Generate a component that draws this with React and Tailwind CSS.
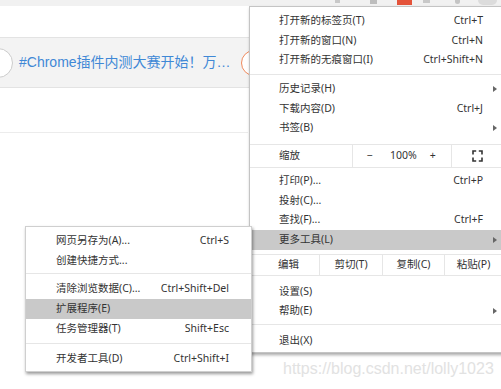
import clsx from 'clsx';

const menuFont = "font-['Noto_Sans','Noto_Sans_CJK_SC',sans-serif]";

function Arrow() {
  return <span className="h-0 w-0 border-y-[3.5px] border-l-[4px] border-y-transparent border-l-[#666]" />;
}

function Item({ label, shortcut, arrow, active }) {
  return (
    <div className={clsx('flex h-[19.5px] items-center pl-[29px] pr-[5px]', active && 'bg-[#c9c9c9]')}>
      <span className="flex-1 whitespace-nowrap">{label}</span>
      {shortcut && <span className="mr-[14px] whitespace-nowrap">{shortcut}</span>}
      {arrow && <Arrow />}
    </div>
  );
}

function SubItem({ label, shortcut, active }) {
  return (
    <div className={clsx('flex h-[20px] items-center pl-[30px] pr-[22px]', active && 'bg-[#c9c9c9]')}>
      <span className="flex-1 whitespace-nowrap">{label}</span>
      {shortcut && <span className="whitespace-nowrap">{shortcut}</span>}
    </div>
  );
}

function FullscreenIcon() {
  return (
    <svg width="11" height="12" viewBox="0 0 11 12">
      <path d="M1 4.5V1h3.2M6.8 1H10v3.5M10 7.5V11H6.8M4.2 11H1V7.5" stroke="#333" strokeWidth="1.6" fill="none" />
    </svg>
  );
}

function MainMenu() {
  return (
    <div className={clsx('absolute left-[249px] top-[6px] w-[254px] border border-[#c4c4c4] bg-white pt-[4.5px] pb-px text-[10.5px] text-[#333] shadow-[1px_2px_3px_rgba(0,0,0,0.35)]', menuFont)}>
      <Item label="打开新的标签页(T)" shortcut="Ctrl+T" />
      <Item label="打开新的窗口(N)" shortcut="Ctrl+N" />
      <Item label="打开新的无痕窗口(I)" shortcut="Ctrl+Shift+N" />
      <div className="mt-[4px] mb-[4.5px] h-px bg-[#e6e6e6]" />
      <Item label="历史记录(H)" arrow />
      <Item label="下载内容(D)" shortcut="Ctrl+J" />
      <Item label="书签(B)" arrow />
      <div className="mt-[6px] h-px bg-[#e6e6e6]" />
      <div className="flex h-[22px] items-stretch">
        <div className="flex w-[102px] items-center pl-[29px]">缩放</div>
        <div className="w-px bg-[#e6e6e6]" />
        <div className="flex w-[98px] items-center pl-[14px]">
          <span>−</span>
          <span className="ml-[17px]">100%</span>
          <span className="ml-[13px]">+</span>
        </div>
        <div className="w-px bg-[#e6e6e6]" />
        <div className="flex w-[50px] items-center justify-center">
          <FullscreenIcon />
        </div>
      </div>
      <div className="mb-[3.5px] h-px bg-[#e6e6e6]" />
      <Item label="打印(P)..." shortcut="Ctrl+P" />
      <Item label="投射(C)..." />
      <Item label="查找(F)..." shortcut="Ctrl+F" />
      <Item label="更多工具(L)" arrow active />
      <div className="mt-[4.5px] h-px bg-[#e6e6e6]" />
      <div className="flex h-[20px] items-stretch">
        <div className="flex w-[69px] items-center pl-[28px]">编辑</div>
        <div className="w-px bg-[#e6e6e6]" />
        <div className="flex w-[62px] items-center justify-center">剪切(T)</div>
        <div className="w-px bg-[#e6e6e6]" />
        <div className="flex w-[61px] items-center justify-center">复制(C)</div>
        <div className="w-px bg-[#e6e6e6]" />
        <div className="flex w-[57px] items-center justify-center">粘贴(P)</div>
      </div>
      <div className="mb-[6px] h-px bg-[#e6e6e6]" />
      <Item label="设置(S)" />
      <Item label="帮助(E)" arrow />
      <div className="mt-[3px] mb-[6.5px] h-px bg-[#e6e6e6]" />
      <Item label="退出(X)" />
    </div>
  );
}

function ToolsMenu() {
  return (
    <div className={clsx('absolute left-[25px] top-[226px] w-[227px] border border-[#cfcfcf] bg-white pt-[4px] pb-[2px] text-[10.5px] text-[#333] shadow-[1px_2px_3px_rgba(0,0,0,0.4)]', menuFont)}>
      <SubItem label="网页另存为(A)..." shortcut="Ctrl+S" />
      <SubItem label="创建快捷方式..." />
      <div className="mt-[2px] mb-[5px] h-px bg-[#e6e6e6]" />
      <SubItem label="清除浏览数据(C)..." shortcut="Ctrl+Shift+Del" />
      <SubItem label="扩展程序(E)" active />
      <SubItem label="任务管理器(T)" shortcut="Shift+Esc" />
      <div className="mt-[4px] mb-[5px] h-px bg-[#e6e6e6]" />
      <SubItem label="开发者工具(D)" shortcut="Ctrl+Shift+I" />
    </div>
  );
}

export default function App() {
  return (
    <div className="relative h-[389px] w-[501px] overflow-hidden bg-white">
      {/* browser toolbar, mostly cut off */}
      <div className="flex h-[6px] items-start bg-[#f1f1f1] pl-[335px]">
        <div className="h-[3px] w-[5px] bg-[#c8c8c8]" />
        <div className="ml-[30px] h-[4px] w-[7px] bg-[#bdbdbd]" />
        <div className="ml-[20px] h-[5px] w-[15px] bg-[#e4533a]" />
        <div className="ml-[11px] h-[3px] w-[7px] bg-[#c8c8c8]" />
        <div className="ml-[25px] h-[4px] w-[5px] rounded-b-full bg-[#c4c4c4]" />
        <div className="ml-[18px] h-[5px] w-[19px] rounded-b-full bg-[#dcdcdc]" />
      </div>

      <div className="h-[31px]" />

      <div className="flex h-[51px] items-center border-y border-[#e3e3e3] bg-[#f3f3f3]">
        <div className="-ml-[17px] h-[30px] w-[30px] shrink-0 rounded-full border border-[#cccccc] bg-white" />
        <div className="ml-[6px] w-[222px] shrink-0 whitespace-nowrap font-['Liberation_Sans','Noto_Sans_CJK_SC',sans-serif] text-[14px] text-[#3f88d6]">
          #Chrome插件内测大赛开始！万…
        </div>
        <div className="h-[26px] w-[26px] shrink-0 rounded-full border border-[#f08a5d] bg-white" />
      </div>

      <div className="h-[44px]" />
      <div className="h-px w-[248px] bg-[#ececec]" />

      <MainMenu />
      <ToolsMenu />

      <div className="absolute left-[283px] top-[359px] whitespace-nowrap font-['Liberation_Sans',sans-serif] text-[16px] leading-[20px] text-[#e2e2e2]">
        https://blog.csdn.net/lolly1023
      </div>
    </div>
  );
}
